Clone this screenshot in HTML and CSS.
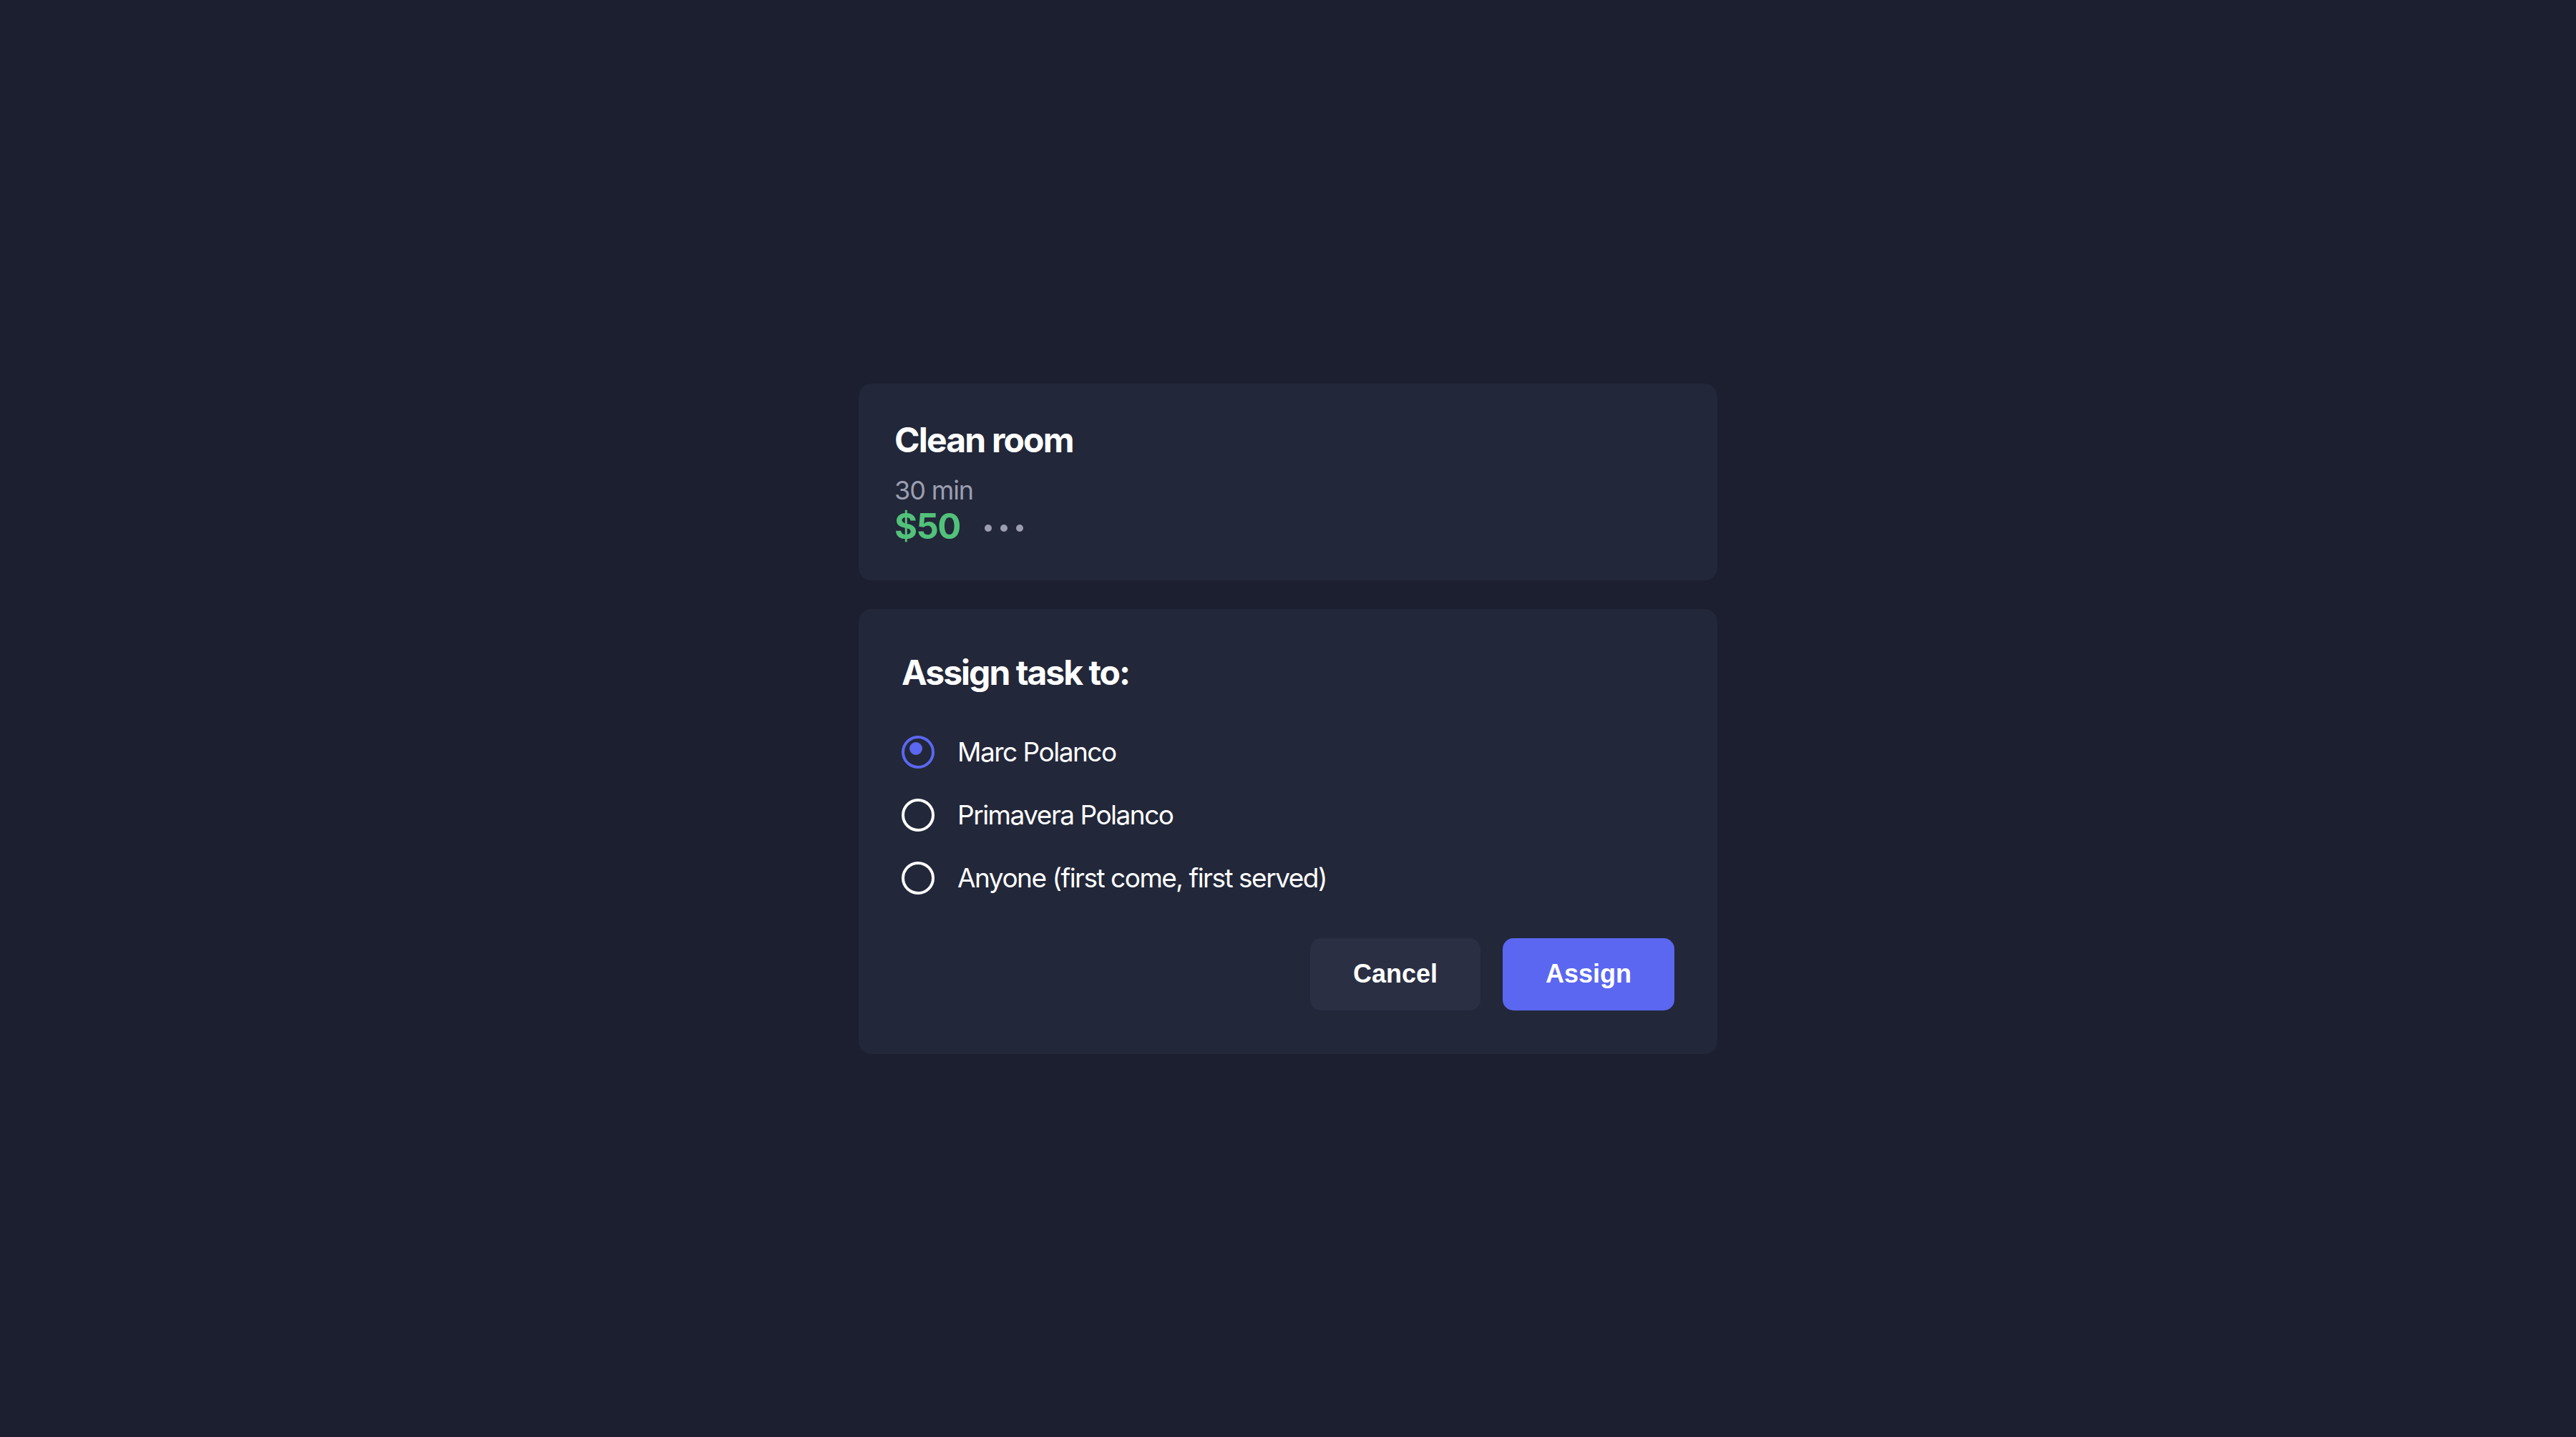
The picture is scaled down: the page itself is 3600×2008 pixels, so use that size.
FILE: index.html
```html
<!DOCTYPE html>
<html lang="en">
<head>
<meta charset="utf-8">
<title>Assign task</title>
<link rel="stylesheet" href="styles.css">
</head>
<body>
<main class="stage">
  <div class="stack">
    <section class="card task">
      <h1 class="task-title">Clean room</h1>
      <div class="task-duration">30 min</div>
      <div class="task-price-row">
        <span class="task-price">$50</span>
        <span class="more"><i></i><i></i><i></i></span>
      </div>
    </section>
    <section class="card assign">
      <h2 class="assign-title">Assign task to:</h2>
      <div class="options">
        <label class="option">
          <span class="radio checked"><span class="dot"></span></span>
          <span class="option-label">Marc Polanco</span>
        </label>
        <label class="option">
          <span class="radio"></span>
          <span class="option-label">Primavera Polanco</span>
        </label>
        <label class="option">
          <span class="radio"></span>
          <span class="option-label">Anyone (first come, first served)</span>
        </label>
      </div>
      <div class="actions">
        <button class="btn btn-cancel">Cancel</button>
        <button class="btn btn-primary">Assign</button>
      </div>
    </section>
  </div>
</main>
</body>
</html>
```

FILE: styles.css
```css
html, body {
  margin: 0;
  padding: 0;
}
body {
  background: #1c1f2f;
  font-family: Inter, "Noto Sans", sans-serif;
  color: #ffffff;
}
.stage {
  width: 3600px;
  height: 2008px;
  display: flex;
  align-items: center;
  justify-content: center;
}
.stack {
  width: 1200px;
  display: flex;
  flex-direction: column;
  gap: 40px;
}
.card {
  background: #222739;
  border-radius: 18px;
  box-sizing: border-box;
}
.task {
  padding: 50px 50px 46px 50px;
  height: 275px;
}
.task-title {
  margin: 0;
  font-size: 48px;
  line-height: 58px;
  font-weight: 700;
  letter-spacing: -1.8px;
}
.task-duration {
  margin-top: 19px;
  font-size: 36px;
  line-height: 44px;
  color: #9b9eb0;
  letter-spacing: -1.1px;
}
.task-price-row {
  display: flex;
  align-items: center;
  gap: 34px;
  height: 58px;
}
.task-price {
  font-size: 49px;
  line-height: 58px;
  font-weight: 700;
  color: #52c27a;
  letter-spacing: -1.6px;
}
.more {
  display: flex;
  gap: 12px;
  padding-top: 4px;
}
.more i {
  display: block;
  width: 10px;
  height: 10px;
  border-radius: 50%;
  background: #9b9eb0;
}
.assign {
  padding: 60px;
  height: 622px;
}
.assign-title {
  margin: 0;
  font-size: 48px;
  line-height: 58px;
  font-weight: 700;
  letter-spacing: -2px;
}
.options {
  margin-top: 59px;
  display: flex;
  flex-direction: column;
  gap: 42px;
}
.option {
  display: flex;
  align-items: center;
  gap: 32px;
  height: 46px;
}
.radio {
  position: relative;
  width: 46px;
  height: 46px;
  box-sizing: border-box;
  border: 4.5px solid #ffffff;
  border-radius: 50%;
  flex: none;
}
.radio.checked {
  border-color: #5b67f1;
}
.radio .dot {
  position: absolute;
  left: 7px;
  top: 5px;
  width: 18px;
  height: 18px;
  border-radius: 50%;
  background: #5b67f1;
}
.option-label {
  font-size: 37px;
  line-height: 46px;
  letter-spacing: -1.5px;
}
.actions {
  margin-top: 61px;
  display: flex;
  justify-content: flex-end;
  gap: 31px;
}
.btn {
  height: 101px;
  border: none;
  border-radius: 15px;
  font-family: "Liberation Sans", Arial, sans-serif;
  font-size: 36px;
  font-weight: 700;
  color: #ffffff;
  padding: 0 60px;
}
.btn-cancel {
  background: #2a2f43;
}
.btn-primary {
  background: #5b67f1;
}
```
